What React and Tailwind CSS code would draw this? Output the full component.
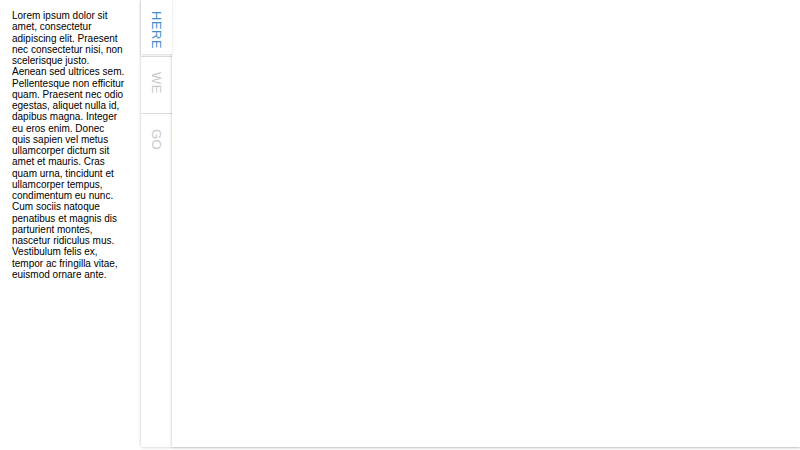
const text =
  "Lorem ipsum dolor sit amet, consectetur adipiscing elit. Praesent nec consectetur nisi, non scelerisque justo. Aenean sed ultrices sem. Pellentesque non efficitur quam. Praesent nec odio egestas, aliquet nulla id, dapibus magna. Integer eu eros enim. Donec quis sapien vel metus ullamcorper dictum sit amet et mauris. Cras quam urna, tincidunt et ullamcorper tempus, condimentum eu nunc. Cum sociis natoque penatibus et magnis dis parturient montes, nascetur ridiculus mus. Vestibulum felis ex, tempor ac fringilla vitae, euismod ornare ante.";

const tabs = ["HERE", "WE", "GO"];

export default function App() {
  return (
    <div className="flex h-[450px] w-[800px] overflow-hidden bg-white font-['Liberation_Sans',Arial,sans-serif]">
      <aside className="w-[141px] shrink-0 py-[10px] pl-3 pr-4 text-[10px] leading-[11.25px] text-black">
        {text}
      </aside>
      <div className="relative mb-[3px] flex flex-1 shadow-[0_0_3px_rgba(0,0,0,0.25)]">
        <div className="flex w-[31px] shrink-0 flex-col">
          {tabs.map((t, i) => (
            <div
              key={t}
              className={
                i === 0
                  ? "relative z-10 flex h-[54px] justify-center bg-white pt-[11px] text-[13px] text-[#3d8fd1] shadow-[0_1px_2px_rgba(0,0,0,0.15)]"
                  : "mt-[2px] flex h-[55px] justify-center border-t border-[#dcdcdc] bg-white pt-[15px] text-[13px] text-[#c8c8c8]"
              }
            >
              <span className="tracking-[0.5px] [writing-mode:vertical-rl]">{t}</span>
            </div>
          ))}
        </div>
        <main className="flex-1 bg-white shadow-[0_0_3px_rgba(0,0,0,0.25)]"></main>
      </div>
    </div>
  );
}
